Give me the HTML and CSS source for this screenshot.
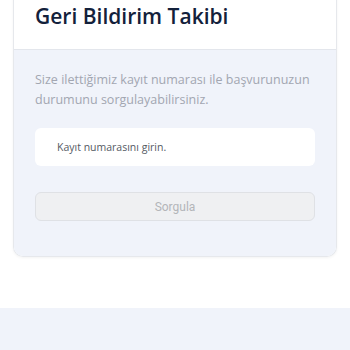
FILE: index.html
```html
<!DOCTYPE html>
<html lang="tr">
<head>
  <meta charset="UTF-8" />
  <meta name="viewport" content="width=device-width, initial-scale=1.0"/>
  <title>Geri Bildirim Takibi</title>
  <link rel="stylesheet" href="styles.css">
</head>
<body>
  <div class="card">
    <div class="card-header">
      <h1>Geri Bildirim Takibi</h1>
    </div>
    <div class="card-body">
      <p class="info">Size ilettiğimiz kayıt numarası ile başvurunuzun<br>durumunu sorgulayabilirsiniz.</p>
      <input class="field" type="text" placeholder="Kayıt numarasını girin.">
      <button class="query" disabled>Sorgula</button>
    </div>
  </div>
  <div class="footer"></div>
</body>
</html>
```

FILE: styles.css
```css
body {
  margin: 0;
  background-color: #fff;
  font-family: "Open Sans", sans-serif;
}

.card {
  margin: -10px 13px 0;
  border: 1px solid #e6e8ec;
  border-top: none;
  border-radius: 0 0 10px 10px;
  box-shadow: 0 1px 3px rgba(0, 0, 0, 0.05);
  overflow: hidden;
}

.card-header {
  background-color: #fff;
  padding: 10px 21px 0;
  height: 49px;
  border-bottom: 1px solid #e3e6ec;
}

.card-header h1 {
  margin: 0;
  padding-top: 2px;
  font-size: 21px;
  font-weight: 600;
  color: #13213b;
}

.card-body {
  background-color: #f0f3fa;
  padding: 20px 21px 35px;
  display: flex;
  flex-direction: column;
}

.info {
  margin: 0 0 18px;
  font-size: 12.5px;
  line-height: 20px;
  color: #a2a6b1;
  white-space: nowrap;
}

.field {
  height: 38px;
  border: none;
  border-radius: 6px;
  background-color: #fff;
  padding: 0 22px;
  font-family: "Open Sans", sans-serif;
  font-size: 10.5px;
  margin-bottom: 26px;
}

.field::placeholder {
  color: #555a63;
}

.query {
  height: 29px;
  border: 1px solid #dfe1e5;
  border-radius: 6px;
  background-color: #eff0f2;
  color: #b3b5b9;
  font-family: Roboto, sans-serif;
  font-size: 12px;
}

.footer {
  margin-top: 51px;
  height: 42px;
  background-color: #f0f3fa;
}
```
